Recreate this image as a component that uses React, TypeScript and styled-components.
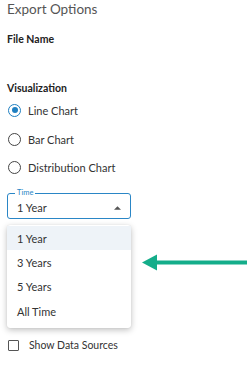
import React from "react";
import styled, { createGlobalStyle } from "styled-components";

const GlobalStyle = createGlobalStyle`
	body {
		margin: 0;
		background: #ffffff;
		font-family: "Lato", "Liberation Sans", sans-serif;
		color: #333333;
	}
`;

const options = ["1 Year", "3 Years", "5 Years", "All Time"];

const App = (): JSX.Element => {
	return (
		<>
			<GlobalStyle />
			<Page>
				<Title>Export Options</Title>
				<SectionLabel>File Name</SectionLabel>
				<SectionLabel $gap={33}>Visualization</SectionLabel>
				<RadioList>
					<RadioRow>
						<Radio $checked />
						Line Chart
					</RadioRow>
					<RadioRow>
						<Radio />
						Bar Chart
					</RadioRow>
					<RadioRow>
						<Radio />
						Distribution Chart
					</RadioRow>
				</RadioList>
				<Row>
					<SelectWrap>
						<Select>
							<Legend>Time</Legend>
							1 Year
							<Caret viewBox="0 0 10 5">
								<path d="M0 5 L5 0 L10 5 Z" fill="#555" />
							</Caret>
						</Select>
						<Menu>
							{options.map((o, i) => (
								<MenuItem key={o} $active={i === 0}>
									{o}
								</MenuItem>
							))}
						</Menu>
					</SelectWrap>
					<Arrow viewBox="0 0 105 17">
						<path d="M0 8.5 L15 0.5 L15 6.5 L105 6.5 L105 10.5 L15 10.5 L15 16.5 Z" fill="#14ad8a" />
					</Arrow>
				</Row>
				<CheckRow>
					<Checkbox />
					Show Data Sources
				</CheckRow>
			</Page>
		</>
	);
};

const Page = styled.div`
	padding: 0 0 0 7px;
	display: flex;
	flex-direction: column;
`;

const Title = styled.div`
	font-size: 13.5px;
	line-height: 18px;
	color: #555555;
`;

const SectionLabel = styled.div<{ $gap?: number }>`
	font-size: 10.5px;
	font-weight: 700;
	color: #222222;
	line-height: 16px;
	margin-top: ${(p) => p.$gap ?? 13}px;
`;

const RadioList = styled.div`
	display: flex;
	flex-direction: column;
`;

const RadioRow = styled.div`
	display: flex;
	align-items: center;
	gap: 7px;
	height: 28.7px;
	font-size: 11px;
	color: #333333;
	padding-left: 1px;
`;

const Radio = styled.span<{ $checked?: boolean }>`
	box-sizing: border-box;
	width: 13px;
	height: 13px;
	border-radius: 50%;
	border: 1.5px solid ${(p) => (p.$checked ? "#1f7fc1" : "#444444")};
	display: flex;
	align-items: center;
	justify-content: center;
	&::after {
		content: "";
		display: ${(p) => (p.$checked ? "block" : "none")};
		width: 6px;
		height: 6px;
		border-radius: 50%;
		background: #1f7fc1;
	}
`;

const Row = styled.div`
	display: flex;
	align-items: flex-start;
	margin-top: 11px;
`;

const SelectWrap = styled.div`
	display: flex;
	flex-direction: column;
	width: 124px;
`;

const Select = styled.div`
	position: relative;
	box-sizing: border-box;
	height: 26px;
	border: 1px solid #2a86c6;
	border-radius: 3px;
	display: flex;
	align-items: center;
	padding: 3px 0 0 9px;
	font-size: 11px;
	color: #333333;
`;

const Legend = styled.span`
	position: absolute;
	top: -6px;
	left: 7px;
	padding: 0 2px;
	background: #ffffff;
	font-size: 7.5px;
	line-height: 10px;
	color: #2a86c6;
`;

const Caret = styled.svg`
	position: absolute;
	right: 9px;
	top: 12px;
	width: 7px;
	height: 4px;
`;

const Menu = styled.div`
	margin-top: 6px;
	background: #ffffff;
	border-radius: 3px;
	box-shadow: 0 2px 6px rgba(0, 0, 0, 0.25), 0 0 1px rgba(0, 0, 0, 0.15);
	padding: 1px 0 5px;
	display: flex;
	flex-direction: column;
`;

const MenuItem = styled.div<{ $active?: boolean }>`
	height: 24.3px;
	display: flex;
	align-items: center;
	padding-left: 10px;
	font-size: 11px;
	color: #333333;
	background: ${(p) => (p.$active ? "#eef3f8" : "transparent")};
`;

const Arrow = styled.svg`
	width: 105px;
	height: 17px;
	margin-top: 60.5px;
	margin-left: 11px;
`;

const CheckRow = styled.div`
	display: flex;
	align-items: center;
	gap: 10px;
	height: 14px;
	margin-top: 10px;
	padding-left: 1px;
	font-size: 10.5px;
	color: #333333;
`;

const Checkbox = styled.span`
	box-sizing: border-box;
	width: 11px;
	height: 11px;
	border: 1.5px solid #555555;
	border-radius: 1px;
`;

export default App;
